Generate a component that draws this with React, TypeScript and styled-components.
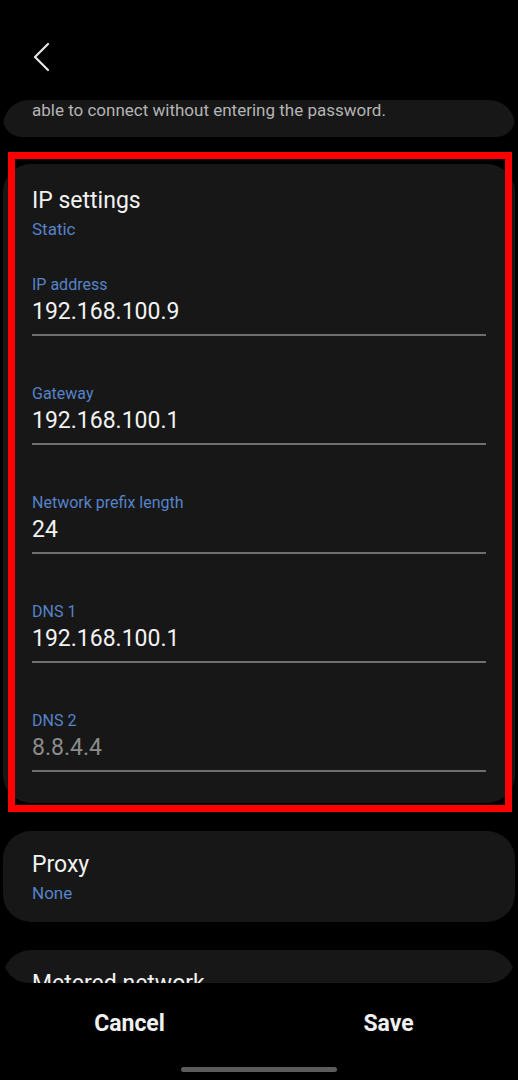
import React from "react";
import styled, { createGlobalStyle } from "styled-components";

const GlobalStyle = createGlobalStyle`
  html, body {
    margin: 0;
    padding: 0;
    background: #000;
  }
  body {
    font-family: Roboto, "Noto Sans", "Liberation Sans", sans-serif;
    -webkit-font-smoothing: antialiased;
  }
`;

const Screen = styled.div`
  width: 518px;
  height: 1080px;
  background: #000;
  display: flex;
  flex-direction: column;
  overflow: hidden;
`;

const Header = styled.header`
  height: 100px;
  flex-shrink: 0;
  display: flex;
  align-items: flex-start;
  padding: 42px 0 0 30px;
  box-sizing: border-box;
`;

const BackButton = styled.button`
  width: 24px;
  height: 30px;
  padding: 0;
  border: none;
  background: none;
  color: #e6e6e6;
  cursor: pointer;
`;

const Viewport = styled.main`
  height: 883px;
  flex-shrink: 0;
  margin: 0 3px;
  border-radius: 26px;
  overflow: hidden;
  display: flex;
  flex-direction: column;
  gap: 28px;
`;

const Card = styled.section<{ $highlight?: boolean }>`
  position: relative;
  flex-shrink: 0;
  background: #171717;
  border-radius: 28px;
  padding: ${({ $highlight }) => ($highlight ? "23px 29px 31px" : "20px 29px 19px")};

  ${({ $highlight }) =>
    $highlight &&
    `
    margin-top: -1px;
    &::after {
      content: "";
      position: absolute;
      top: -12px;
      left: 5px;
      right: 3px;
      bottom: -9px;
      border: 7px solid #ff0000;
      pointer-events: none;
    }
  `}
`;

const TopCard = styled(Card)`
  padding: 0 29px 17px;
`;

const Note = styled.p`
  margin: 0;
  font-size: 17px;
  line-height: 20px;
  color: #b4b4b4;
`;

const Title = styled.h2`
  margin: 0;
  font-size: 23px;
  line-height: 28px;
  font-weight: 400;
  color: #f2f2f2;
`;

const Summary = styled.div`
  font-size: 17px;
  line-height: 20px;
  color: #5683c9;
  margin-top: 4px;
`;

const Fields = styled.div`
  display: flex;
  flex-direction: column;
  gap: 48px;
  margin-top: 36px;
`;

const Field = styled.label`
  display: flex;
  flex-direction: column;
`;

const FieldLabel = styled.span`
  font-size: 16px;
  line-height: 20px;
  color: #5683c9;
`;

const FieldValue = styled.span<{ $hint?: boolean }>`
  margin-top: 3px;
  font-size: 23px;
  line-height: 28px;
  color: ${({ $hint }) => ($hint ? "#8c8c8c" : "#f2f2f2")};
  padding-bottom: 8px;
  border-bottom: 2px solid #6f6f6f;
`;

const BottomBar = styled.footer`
  flex: 1;
  display: flex;
  flex-direction: column;
  align-items: center;
`;

const Actions = styled.div`
  width: 100%;
  height: 80px;
  display: grid;
  grid-template-columns: 1fr 1fr;
`;

const ActionButton = styled.button`
  border: none;
  background: none;
  font-family: Roboto, "Noto Sans", "Liberation Sans", sans-serif;
  font-size: 23px;
  font-weight: 700;
  color: #f0f0f0;
  cursor: pointer;
`;

const HomeIndicator = styled.div`
  width: 156px;
  height: 5px;
  margin-top: 4px;
  border-radius: 3px;
  background: #5c5c5c;
`;

const fields = [
  { label: "IP address", value: "192.168.100.9" },
  { label: "Gateway", value: "192.168.100.1" },
  { label: "Network prefix length", value: "24" },
  { label: "DNS 1", value: "192.168.100.1" },
  { label: "DNS 2", value: "8.8.4.4", hint: true },
];

const App: React.FC = () => {
  return (
    <>
      <GlobalStyle />
      <Screen>
        <Header>
          <BackButton aria-label="Back">
            <svg width="24" height="30" viewBox="0 0 24 30" fill="none">
              <path d="M18 2 L5 15 L18 28" stroke="currentColor" strokeWidth="2.2" strokeLinecap="round" strokeLinejoin="round" />
            </svg>
          </BackButton>
        </Header>

        <Viewport>
          <TopCard>
            <Note>able to connect without entering the password.</Note>
          </TopCard>

          <Card $highlight>
            <Title>IP settings</Title>
            <Summary>Static</Summary>
            <Fields>
              {fields.map((f) => (
                <Field key={f.label}>
                  <FieldLabel>{f.label}</FieldLabel>
                  <FieldValue $hint={f.hint}>{f.value}</FieldValue>
                </Field>
              ))}
            </Fields>
          </Card>

          <Card>
            <Title>Proxy</Title>
            <Summary>None</Summary>
          </Card>

          <Card>
            <Title>Metered network</Title>
          </Card>
        </Viewport>

        <BottomBar>
          <Actions>
            <ActionButton>Cancel</ActionButton>
            <ActionButton>Save</ActionButton>
          </Actions>
          <HomeIndicator />
        </BottomBar>
      </Screen>
    </>
  );
};

export default App;
